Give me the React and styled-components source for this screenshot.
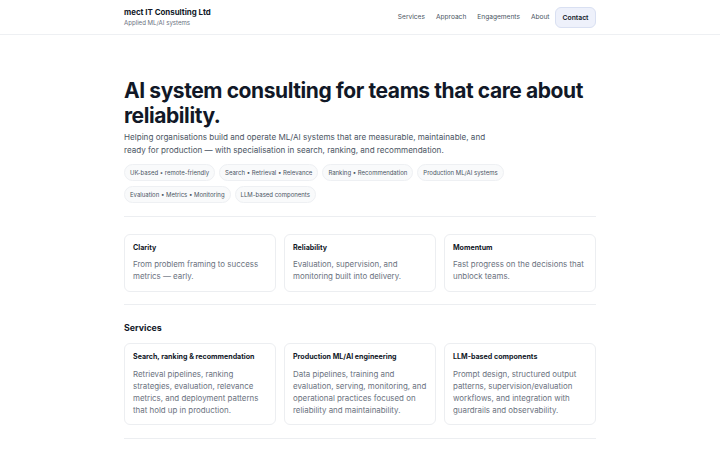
import styled, { createGlobalStyle } from "styled-components";

const GlobalStyle = createGlobalStyle`
  * { box-sizing: border-box; }
  body {
    margin: 0;
    background: #ffffff;
    font-family: Inter, "Noto Sans", sans-serif;
    color: #111827;
  }
`;

const pillars = [
  { title: "Clarity", text: "From problem framing to success metrics — early." },
  { title: "Reliability", text: "Evaluation, supervision, and monitoring built into delivery." },
  { title: "Momentum", text: "Fast progress on the decisions that unblock teams." },
];

const services = [
  {
    title: "Search, ranking & recommendation",
    text: "Retrieval pipelines, ranking strategies, evaluation, relevance metrics, and deployment patterns that hold up in production.",
  },
  {
    title: "Production ML/AI engineering",
    text: "Data pipelines, training and evaluation, serving, monitoring, and operational practices focused on reliability and maintainability.",
  },
  {
    title: "LLM-based components",
    text: "Prompt design, structured output patterns, supervision/evaluation workflows, and integration with guardrails and observability.",
  },
];

const tags = [
  "UK-based • remote-friendly",
  "Search • Retrieval • Relevance",
  "Ranking • Recommendation",
  "Production ML/AI systems",
  "Evaluation • Metrics • Monitoring",
  "LLM-based components",
];

export default function App() {
  return (
    <>
      <GlobalStyle />
      <Header>
        <Inner>
          <HeaderRow>
            <Brand>
              <BrandName>mect IT Consulting Ltd</BrandName>
              <BrandSub>Applied ML/AI systems</BrandSub>
            </Brand>
            <Nav>
              <NavLink>Services</NavLink>
              <NavLink>Approach</NavLink>
              <NavLink>Engagements</NavLink>
              <NavLink>About</NavLink>
              <ContactButton>Contact</ContactButton>
            </Nav>
          </HeaderRow>
        </Inner>
      </Header>
      <Inner>
        <Hero>
          <Title>AI system consulting for teams that care about reliability.</Title>
          <Lead>
            Helping organisations build and operate ML/AI systems that are measurable, maintainable, and
            ready for production — with specialisation in search, ranking, and recommendation.
          </Lead>
          <Tags>
            {tags.map((t) => (
              <Tag key={t}>{t}</Tag>
            ))}
          </Tags>
        </Hero>
        <Divider />
        <Section $top={17} $bottom={12}>
          <Grid>
            {pillars.map((p) => (
              <Card key={p.title}>
                <CardTitle>{p.title}</CardTitle>
                <CardText>{p.text}</CardText>
              </Card>
            ))}
          </Grid>
        </Section>
        <Divider />
        <Section $top={16} $bottom={13}>
          <SectionTitle>Services</SectionTitle>
          <Grid>
            {services.map((s) => (
              <Card key={s.title} $bottom={8}>
                <CardTitle>{s.title}</CardTitle>
                <CardText $lh={12}>{s.text}</CardText>
              </Card>
            ))}
          </Grid>
        </Section>
        <Divider />
      </Inner>
    </>
  );
}

const Header = styled.header`
  border-bottom: 1px solid #eef0f3;
`;

const Inner = styled.div`
  width: 472px;
  margin: 0 auto;
`;

const HeaderRow = styled.div`
  height: 34px;
  display: flex;
  align-items: center;
  justify-content: space-between;
`;

const Brand = styled.div`
  display: flex;
  flex-direction: column;
  gap: 2px;
`;

const BrandName = styled.div`
  font-size: 7.9px;
  font-weight: 700;
  color: #111827;
  line-height: 10px;
`;

const BrandSub = styled.div`
  font-size: 6.1px;
  color: #6b7280;
  line-height: 8px;
`;

const Nav = styled.nav`
  display: flex;
  align-items: center;
`;

const NavLink = styled.a`
  padding: 4px 5.5px;
  font-size: 6.6px;
  color: #4b5563;
  cursor: pointer;
`;

const ContactButton = styled.a`
  font-size: 6.8px;
  font-weight: 600;
  color: #111827;
  background: #eef1fb;
  border: 1px solid #d9e0f2;
  border-radius: 6px;
  padding: 0 6.5px;
  height: 21px;
  display: flex;
  align-items: center;
`;

const Hero = styled.section`
  padding: 43px 0 13px;
`;

const Title = styled.h1`
  margin: 0;
  font-size: 21px;
  line-height: 25px;
  font-weight: 700;
  letter-spacing: -0.02em;
  color: #111827;
`;

const Lead = styled.p`
  margin: 3px 0 0;
  font-size: 8.1px;
  line-height: 13px;
  color: #4b5563;
  max-width: 372px;
`;

const Tags = styled.div`
  margin-top: 7px;
  display: flex;
  flex-wrap: wrap;
  gap: 5px 4px;
`;

const Tag = styled.span`
  height: 17px;
  display: inline-flex;
  align-items: center;
  padding: 0 5px;
  font-size: 6px;
  color: #4b5563;
  background: #f9fafb;
  border: 1px solid #eef0f3;
  border-radius: 999px;
`;

const Divider = styled.hr`
  margin: 0;
  border: 0;
  border-top: 1px solid #eceef1;
`;

const Section = styled.section`
  padding: ${(p) => p.$top}px 0 ${(p) => p.$bottom}px;
`;

const SectionTitle = styled.h2`
  margin: 0 0 8px;
  font-size: 8.8px;
  line-height: 14px;
  font-weight: 700;
  color: #111827;
`;

const Grid = styled.div`
  display: grid;
  grid-template-columns: repeat(3, 1fr);
  gap: 8px;
`;

const Card = styled.div`
  border: 1px solid #eceef1;
  border-radius: 6px;
  padding: 8px 8px ${(p) => p.$bottom || 9}px;
  background: #ffffff;
`;

const CardTitle = styled.div`
  font-size: 7.1px;
  font-weight: 700;
  line-height: 10px;
  color: #111827;
  margin-bottom: 6px;
`;

const CardText = styled.div`
  font-size: 7.9px;
  line-height: ${(p) => p.$lh || 11.5}px;
  color: #6b7280;
`;
